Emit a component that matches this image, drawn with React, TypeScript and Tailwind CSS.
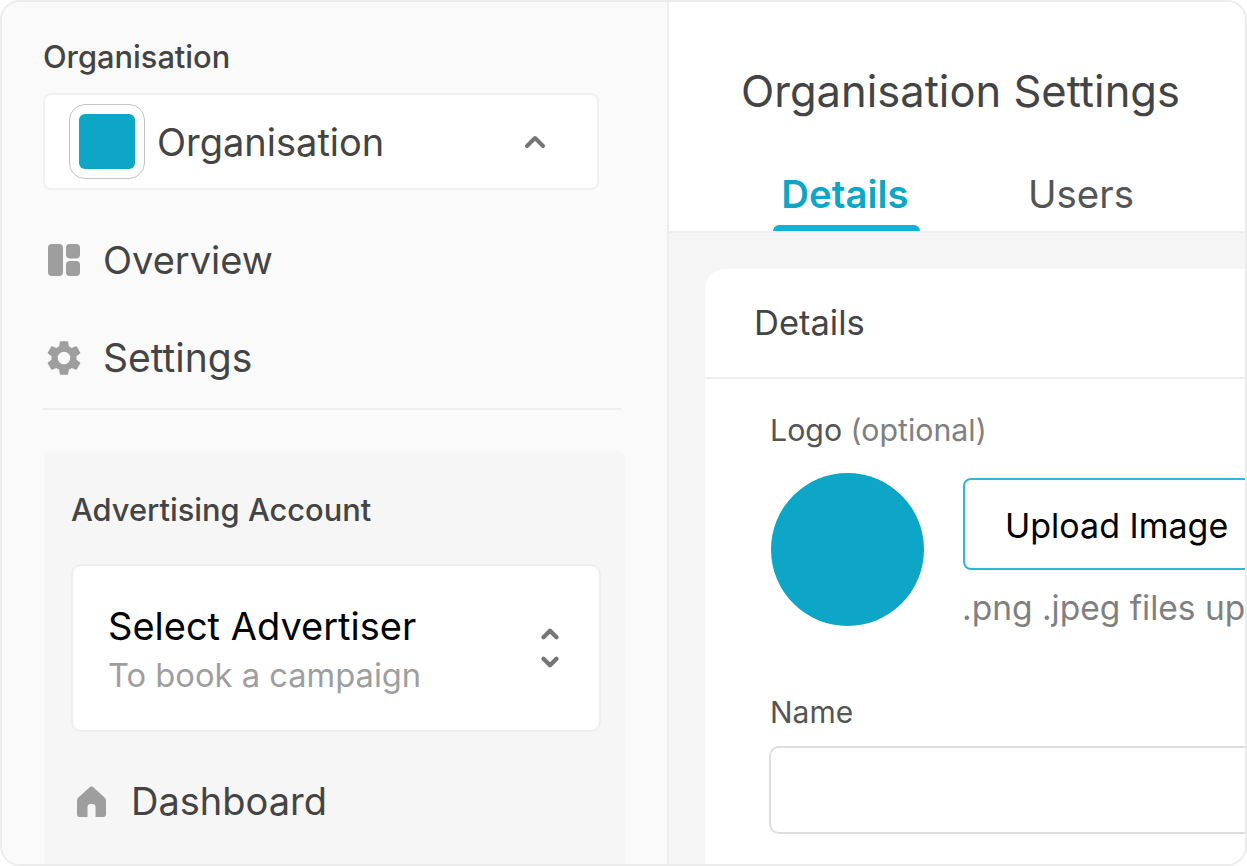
import { ChevronDown, ChevronUp } from 'lucide-react'

function OverviewIcon() {
  return (
    <svg viewBox="0 0 32 32" className="w-[32px] h-[32px]" fill="#9e9e9e">
      <rect x="0" y="0" width="15" height="32" rx="4" />
      <rect x="18" y="0" width="14" height="14.5" rx="4" />
      <rect x="18" y="17" width="14" height="15" rx="4" />
    </svg>
  )
}

function GearIcon() {
  return (
    <svg viewBox="0 0 24 24" className="w-[42px] h-[42px]" fill="#9e9e9e">
      <path d="M19.14 12.94c.04-.3.06-.61.06-.94 0-.32-.02-.64-.07-.94l2.03-1.58a.49.49 0 0 0 .12-.61l-1.92-3.32a.49.49 0 0 0-.59-.22l-2.39.96c-.5-.38-1.03-.7-1.62-.94l-.36-2.54a.48.48 0 0 0-.48-.41h-3.84a.47.47 0 0 0-.47.41l-.36 2.54c-.59.24-1.13.57-1.62.94l-2.39-.96a.48.48 0 0 0-.59.22L2.74 8.87a.47.47 0 0 0 .12.61l2.03 1.58c-.05.3-.09.63-.09.94s.02.64.07.94l-2.03 1.58a.49.49 0 0 0-.12.61l1.92 3.32c.12.22.37.29.59.22l2.39-.96c.5.38 1.03.7 1.62.94l.36 2.54c.05.24.24.41.48.41h3.84c.24 0 .44-.17.47-.41l.36-2.54c.59-.24 1.13-.56 1.62-.94l2.39.96c.22.08.47 0 .59-.22l1.92-3.32a.46.46 0 0 0-.12-.61l-2.01-1.58zM12 15.6A3.6 3.6 0 1 1 12 8.4a3.6 3.6 0 0 1 0 7.2z" />
    </svg>
  )
}

function HomeIcon() {
  return (
    <svg viewBox="0 0 29 31" className="w-[29px] h-[31px]" fill="#9e9e9e">
      <path d="M14.5 0.5 C15.3 0.5 16 0.8 16.6 1.4 L27.6 11.5 C28.5 12.3 29 13.3 29 14.5 L29 28.5 C29 29.9 27.9 31 26.5 31 L18.5 31 L18.5 21 C18.5 19.3 17.2 18 15.5 18 L13.5 18 C11.8 18 10.5 19.3 10.5 21 L10.5 31 L2.5 31 C1.1 31 0 29.9 0 28.5 L0 14.5 C0 13.3 0.5 12.3 1.4 11.5 L12.4 1.4 C13 0.8 13.7 0.5 14.5 0.5 Z" />
    </svg>
  )
}

function NavItem({ icon, label, className, textClass = 'text-[38px]' }: { icon: React.ReactNode; label: string; className: string; textClass?: string }) {
  return (
    <div className={`flex items-center ${className}`}>
      {icon}
      <span className={`${textClass} leading-[44px] text-[#444444]`}>{label}</span>
    </div>
  )
}

export default function App() {
  return (
    <div className="w-[1247px] h-[866px] bg-white overflow-hidden font-['Inter','Liberation_Sans',sans-serif]">
      <div className="flex h-full overflow-hidden rounded-[20px] border-2 border-[#ececec]">
        {/* sidebar */}
        <aside className="w-[665px] shrink-0 bg-[#fafafa] pl-[41px] pt-[36px] flex flex-col">
          <p className="text-[30.8px] leading-[38px] font-medium text-[#444444]">Organisation</p>
          <div className="mt-[17px] w-[556px] h-[97px] bg-white rounded-[8px] border-2 border-[#f0f0f0] flex items-center pl-[24px] pr-[46px]">
            <div className="w-[76px] h-[75px] shrink-0 rounded-[16px] border border-[#c4c4c4] bg-white flex items-center justify-center">
              <div className="w-[56px] h-[55px] rounded-[6px] bg-[#0da6c7]" />
            </div>
            <span className="ml-[12px] text-[38px] leading-[44px] text-[#444444]">Organisation</span>
            <ChevronUp className="ml-auto text-[#757575]" size={32} strokeWidth={3} />
          </div>

          <NavItem className="mt-[48px] pl-[5px] gap-[23px]" icon={<OverviewIcon />} label="Overview" />
          <NavItem className="mt-[54px] pl-[0px] gap-[18px]" textClass="text-[39px]" icon={<GearIcon />} label="Settings" />

          <div className="mt-[28px] -ml-[1px] w-[579px] h-[2px] bg-[#eeeeee]" />

          <section className="mt-[42px] ml-[1px] w-[582px] flex-1 bg-[#f6f6f6] rounded-t-[8px] pl-[27px] pt-[40px]">
            <p className="text-[30.8px] leading-[36px] font-medium text-[#444444]">Advertising Account</p>
            <div className="mt-[36px] w-[530px] h-[168px] bg-white rounded-[10px] border-2 border-[#eeeeee] flex items-center pl-[35px] pr-[36px]">
              <div className="mt-[3px]">
                <p className="text-[38px] leading-[44px] text-black">Select Advertiser</p>
                <p className="mt-[7px] text-[32.7px] leading-[40px] text-[#9e9e9e]">To book a campaign</p>
              </div>
              <div className="ml-auto flex flex-col items-center gap-[6px] text-[#757575]">
                <ChevronUp size={26} strokeWidth={4} className="-my-[2px]" />
                <ChevronDown size={26} strokeWidth={4} className="-my-[2px]" />
              </div>
            </div>
            <NavItem className="mt-[47px] pl-[6px] gap-[25px]" icon={<HomeIcon />} label="Dashboard" />
          </section>
        </aside>

        <div className="w-[2px] shrink-0 bg-[#eeeeee]" />

        {/* main */}
        <main className="flex-1 min-w-0 flex flex-col bg-[#f5f5f5]">
          <header className="h-[231px] shrink-0 bg-white border-b-2 border-[#eeeeee] pl-[73px] flex flex-col">
            <h1 className="mt-[61px] -ml-[1px] text-[43.5px] leading-[56px] font-normal text-[#444444] whitespace-nowrap">Organisation Settings</h1>
            <nav className="mt-[auto] flex items-end">
              <div className="ml-[31px] w-[147px] flex flex-col items-center">
                <span className="-ml-[3px] text-[38.4px] leading-[44px] font-semibold text-[#0da6c7]">Details</span>
                <span className="mt-[9px] w-full h-[6px] rounded-t-[6px] bg-[#12b2d8]" />
              </div>
              <span className="ml-[108px] mb-[15px] text-[38.4px] leading-[44px] text-[#555555]">Users</span>
            </nav>
          </header>

          <div className="flex-1 pl-[36px] pt-[36px] min-h-0">
            <div className="h-full bg-white rounded-tl-[20px]">
              <div className="h-[110px] border-b-2 border-[#eeeeee] pl-[49px] flex items-center">
                <h2 className="text-[34.5px] leading-[40px] font-normal text-[#444444]">Details</h2>
              </div>
              <div className="pl-[66px] pt-[33px]">
                <p className="-ml-[1px] text-[30.3px] leading-[36px] text-[#555555] whitespace-nowrap">
                  Logo <span className="text-[#808080]">(optional)</span>
                </p>
                <div className="mt-[25px] flex">
                  <div className="w-[153px] h-[153px] shrink-0 rounded-full bg-[#0da6c7]" />
                  <div className="ml-[39px] mt-[5px] w-[400px] shrink-0">
                    <div className="h-[92px] rounded-[8px] border-2 border-[#2db7d8] pl-[40px] pt-[3px] flex items-center">
                      <span className="text-[34px] leading-[42px] text-black whitespace-nowrap">Upload Image</span>
                    </div>
                    <p className="mt-[18px] -ml-[1px] text-[33.5px] leading-[40px] text-[#808080] whitespace-nowrap">.png .jpeg files up</p>
                  </div>
                </div>
                <p className="mt-[66px] -ml-[1px] text-[30px] leading-[36px] text-[#555555]">Name</p>
                <div className="mt-[16px] -ml-[2px] w-[600px] h-[88px] rounded-[10px] border-2 border-[#dddddd]" />
              </div>
            </div>
          </div>
        </main>
      </div>
    </div>
  )
}
